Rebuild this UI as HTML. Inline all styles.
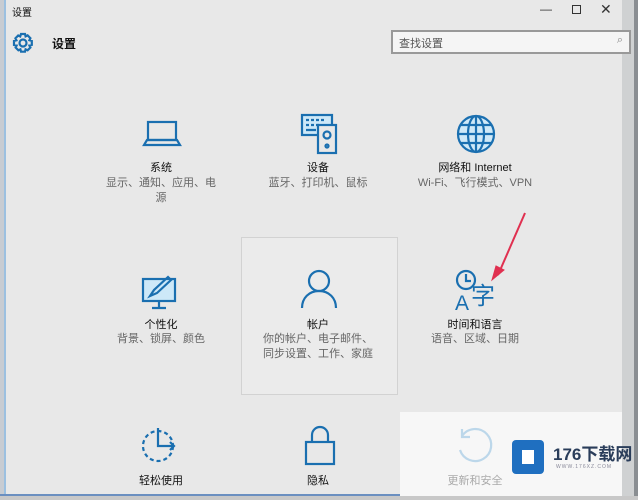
<!DOCTYPE html>
<html><head><meta charset="utf-8"><style>
*{margin:0;padding:0;box-sizing:border-box}
body{width:638px;height:500px;overflow:hidden;background:#e8e8e8;font-family:"Liberation Sans","Noto Sans CJK SC",sans-serif;position:relative;color:#111}
.a{position:absolute}
.t{position:absolute;width:150px;text-align:center;font-size:11px;color:#111}
.d{position:absolute;width:130px;text-align:center;font-size:11px;color:#666;line-height:15px}
svg{position:absolute;fill:none;stroke:#1a6fb0;stroke-width:2.2}
</style></head><body>
<div class="a" style="left:0;top:0;width:4px;height:500px;background:#c8ccd2"></div>
<div class="a" style="left:4px;top:0;width:2px;height:500px;background:#9cc0e0"></div>
<div class="a" style="left:622px;top:0;width:12px;height:500px;background:#cfd1d2"></div>
<div class="a" style="left:634px;top:0;width:4px;height:500px;background:#8a8e92"></div>
<div class="a" style="left:12px;top:4px;font-size:10px">设置</div>
<div class="a" style="left:540px;top:2px;font-size:12px;color:#333">—</div>
<div class="a" style="left:572px;top:5px;width:9px;height:9px;border:1px solid #333"></div>
<div class="a" style="left:600px;top:1px;font-size:14px;color:#333">✕</div>
<svg style="left:12px;top:32px" width="22" height="22" viewBox="0 0 22 22" stroke-width="1.4"><circle cx="11" cy="11" r="3.5"/><path d="M9 2h4l.6 2.4 2-1 2.8 2.8-1 2 2.4.7v4l-2.4.6 1 2-2.8 2.8-2-1-.6 2.4H9l-.6-2.4-2 1-2.8-2.8 1-2L2 13V9l2.4-.7-1-2 2.8-2.8 2 1z"/></svg>
<div class="a" style="left:52px;top:35px;font-size:12px;font-weight:bold">设置</div>
<div class="a" style="left:391px;top:30px;width:240px;height:24px;border:2px solid #999;background:#f5f5f5;font-size:11px;color:#555;padding:3px 6px">查找设置<span style="position:absolute;right:6px;top:2px;color:#888">⌕</span></div>

<svg style="left:142px;top:119px" width="40" height="30" viewBox="0 0 40 30"><rect x="6" y="3" width="28" height="18"/><path d="M2 26h36l-3-5H5z"/></svg>
<div class="t" style="left:86px;top:159px">系统</div>
<div class="d" style="left:96px;top:176px">显示、通知、应用、电<br>源</div>
<svg style="left:300px;top:113px" width="40" height="42" viewBox="0 0 40 42" stroke-width="2"><rect x="2" y="2" width="30" height="20" fill="#cde8f8"/><path d="M6 7h3M11 7h3M16 7h3M21 7h3M6 12h3M11 12h3M16 12h3M6 17h10"/><rect x="18" y="12" width="18" height="28" fill="#e8e8e8"/><circle cx="27" cy="22" r="3.5"/><circle cx="27" cy="33" r="1.5"/></svg>
<div class="t" style="left:243px;top:159px">设备</div>
<div class="d" style="left:253px;top:176px">蓝牙、打印机、鼠标</div>
<svg style="left:455px;top:113px" width="42" height="42" viewBox="0 0 42 42"><circle cx="21" cy="21" r="18" fill="#cfe9f8"/><ellipse cx="21" cy="21" rx="8" ry="18"/><path d="M3 21h36M6 12h30M6 30h30M21 3v36"/></svg>
<div class="t" style="left:400px;top:159px">网络和 Internet</div>
<div class="d" style="left:410px;top:176px">Wi-Fi、飞行模式、VPN</div>

<div class="a" style="left:241px;top:237px;width:157px;height:158px;border:1px solid #d2d2d2;background:#ebebeb"></div>
<svg style="left:140px;top:274px" width="40" height="38" viewBox="0 0 40 38"><rect x="3" y="5" width="32" height="22" fill="#cde8f8"/><path d="M19 27v6M12 34h14M10 22l4-6 14-13 3 3-14 13z"/></svg>
<div class="t" style="left:86px;top:316px">个性化</div>
<div class="d" style="left:96px;top:332px">背景、锁屏、颜色</div>
<svg style="left:300px;top:268px" width="38" height="42" viewBox="0 0 38 42"><circle cx="19" cy="13" r="10"/><path d="M2 40c0-10 7-17 17-17s17 7 17 17"/></svg>
<div class="t" style="left:243px;top:316px">帐户</div>
<div class="d" style="left:253px;top:332px">你的帐户、电子邮件、<br>同步设置、工作、家庭</div>
<svg style="left:453px;top:268px" width="50" height="44" viewBox="0 0 50 44"><circle cx="13" cy="12" r="9"/><path d="M13 6v7h5"/><text x="2" y="42" font-size="21" fill="#1a6fb0" stroke="none" font-family="Liberation Sans">A</text><text x="18" y="36" font-size="24" fill="#1a6fb0" stroke="none" font-family="Noto Sans CJK SC">字</text></svg>
<div class="t" style="left:400px;top:316px">时间和语言</div>
<div class="d" style="left:410px;top:332px">语音、区域、日期</div>
<svg style="left:480px;top:210px" width="50" height="75" viewBox="0 0 50 75"><path d="M45 3L18 65" stroke="#e03050" stroke-width="2"/><path d="M12 70l4-14 8 4z" fill="#e03050" stroke="#e03050" stroke-width="1"/></svg>

<svg style="left:140px;top:426px" width="40" height="38" viewBox="0 0 40 38" stroke-dasharray="4 3"><circle cx="18" cy="20" r="15"/></svg>
<svg style="left:140px;top:426px" width="40" height="38" viewBox="0 0 40 38"><path d="M18 2v18h16M30 16l4 4-4 4"/></svg>
<div class="t" style="left:86px;top:472px">轻松使用</div>
<svg style="left:303px;top:424px" width="34" height="42" viewBox="0 0 34 42"><path d="M9 18V11a8 8 0 0 1 16 0v7"/><rect x="3" y="18" width="28" height="22"/></svg>
<div class="t" style="left:243px;top:472px">隐私</div>
<div class="a" style="left:400px;top:412px;width:222px;height:88px;background:#f7f7f7"></div>
<svg style="left:454px;top:426px;stroke:#bcd7ea" width="42" height="40" viewBox="0 0 42 40"><path d="M8 10A16 16 0 1 1 6 24M8 3v8h8"/></svg>
<div class="t" style="left:400px;top:472px;color:#aaa">更新和安全</div>
<div class="a" style="left:512px;top:440px;width:32px;height:34px;border-radius:4px;background:#1f6fc0"></div>
<div class="a" style="left:522px;top:450px;width:12px;height:14px;background:#fff"></div>
<div class="a" style="left:553px;top:440px;font-size:17px;font-weight:bold;color:#2a3d5a">176下载网</div>
<div class="a" style="left:556px;top:464px;font-size:5px;color:#889;letter-spacing:1px">WWW.176XZ.COM</div>
<div class="a" style="left:0;top:494px;width:400px;height:2px;background:#6b8fc0"></div>
<div class="a" style="left:0;top:496px;width:638px;height:4px;background:#c8c8c8"></div>
</body></html>
